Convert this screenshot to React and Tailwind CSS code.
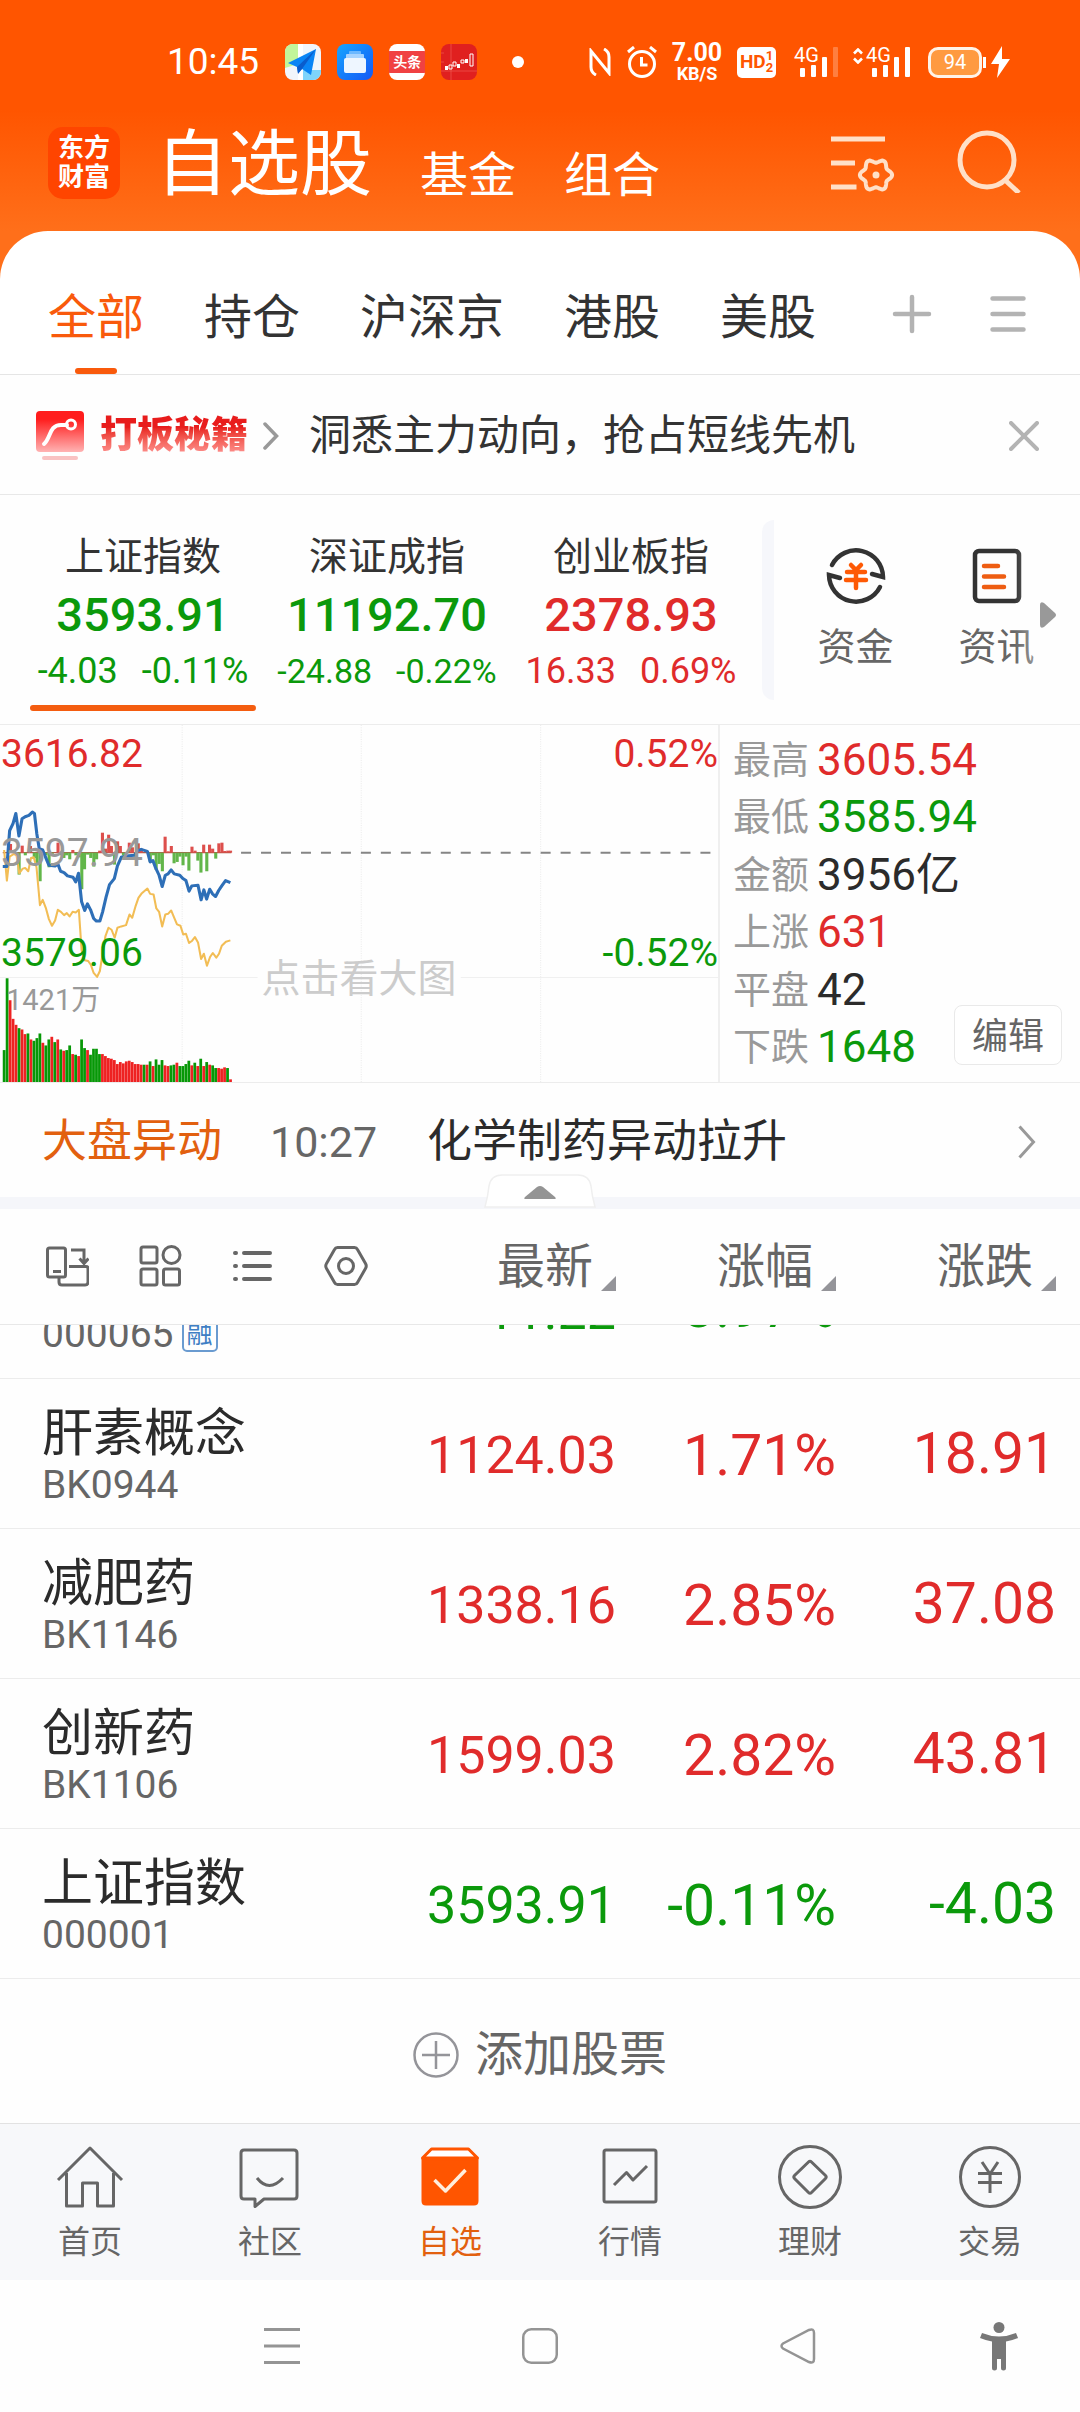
import React from "react";

const RED = "text-[#e02b2b]";
const GREEN = "text-[#0b990b]";

/* ---------- status bar ---------- */

function MapAppIcon() {
  return (
    <svg viewBox="0 0 36 36" className="size-9">
      <defs>
        <clipPath id="mapClip"><rect width="36" height="36" rx="8" /></clipPath>
      </defs>
      <g clipPath="url(#mapClip)">
        <rect width="36" height="36" fill="#f1f5fb" />
        <path d="M0 0h13v20L0 24z" fill="#c2f59a" />
        <path d="M18 26h18v10H18z" fill="#7ed4fb" />
        <path d="M13 0h5v36h-5z" fill="#fff" />
      </g>
      <path d="M31 5L3 19l9 4 1 6 4-4 9 6z" fill="#0a84f5" />
      <path d="M31 5L12 23l1 7 4-5z" fill="#0a5ccc" />
    </svg>
  );
}

function FilesAppIcon() {
  return (
    <svg viewBox="0 0 36 36" className="size-9">
      <defs>
        <linearGradient id="filesBg" x1="0" y1="0" x2="1" y2="1">
          <stop offset="0" stopColor="#16a5ff" />
          <stop offset="1" stopColor="#1458f5" />
        </linearGradient>
      </defs>
      <rect width="36" height="36" rx="8" fill="url(#filesBg)" />
      <rect x="12" y="7" width="12" height="5" rx="1" fill="#6cb8ff" />
      <rect x="9" y="10" width="18" height="6" rx="1" fill="#a6d3ff" />
      <rect x="7" y="14" width="22" height="15" rx="2" fill="#eef6ff" />
    </svg>
  );
}

function StockAppIcon() {
  return (
    <svg viewBox="0 0 36 36" className="size-9">
      <rect width="36" height="36" rx="8" fill="#e0201f" />
      <path d="M10 0v36M0 27h36M0 9h3M0 18h3" stroke="#ee5a50" strokeWidth="0.7" />
      <path d="M4 22h3v4H4zM16 20h3v4h-3zM24 15h3v4h-3z" fill="#fff" />
      <path d="M8 21h3v4H8zM12 18h3v4h-3zM20 16h3v3h-3zM29 10h3v12h-3z" fill="none" stroke="#fff" strokeWidth="1" />
    </svg>
  );
}

function Signal({ weak, data }) {
  return (
    <div className="flex items-center gap-[3px]">
      {data && (
        <svg viewBox="0 0 10 16" className="mb-3 h-4 w-[10px]" fill="none" stroke="#fff" strokeWidth="2.6">
          <path d="M1 5.500l4-4 4 4M1 10.500l4 4 4-4" />
        </svg>
      )}
      <div className="relative h-8 w-[44px]">
        <span className="absolute left-0 top-0 text-[20px] leading-[18px]">4G</span>
        <svg viewBox="0 0 44 32" className="h-8 w-[44px]" fill="#fff">
          <rect x="6" y="22" width="5" height="9" rx="1" />
          <rect x="17" y="19" width="5" height="12" rx="1" />
          <rect x="28" y="11" width="5" height="20" rx="1" />
          <rect x="39" y="1" width="5" height="30" rx="1" opacity={weak ? 0.25 : 1} />
        </svg>
      </div>
    </div>
  );
}

function StatusBar() {
  return (
    <div className="flex h-[124px] items-center justify-between pl-[167px] pr-[68px] text-white">
      <div className="flex items-center">
        <span className="text-[37px] leading-10">10:45</span>
        <div className="ml-[26px] flex items-center gap-4">
          <MapAppIcon />
          <FilesAppIcon />
          <div className="flex size-9 flex-col justify-center overflow-hidden rounded-lg bg-white">
            <span className="bg-[#f04142] text-center text-[14px] font-bold leading-[22px]">头条</span>
          </div>
          <StockAppIcon />
        </div>
        <span className="ml-[35px] size-3 rounded-full bg-white" />
      </div>
      <div className="flex items-center">
        <svg viewBox="0 0 22 28" className="h-7 w-[22px]" fill="none" stroke="#fff" strokeWidth="3">
          <path d="M7 27C3 25 2 22 2 19V3l18 22V9c0-4-1-6-5-8" />
        </svg>
        <svg viewBox="0 0 30 32" className="ml-4 h-8 w-[30px]" fill="none" stroke="#fff" strokeWidth="3">
          <circle cx="15" cy="18" r="12.500" />
          <path d="M14.500 11v8h6M1 6l6-5M29 6l-6-5" />
        </svg>
        <div className="ml-[15px] flex w-[50px] flex-col items-center font-bold">
          <span className="text-[25px] leading-[22px]">7.00</span>
          <span className="text-[18px] leading-[19px]">KB/S</span>
        </div>
        <div className="ml-[15px] flex h-[31px] w-[39px] items-center justify-center rounded-[5px] bg-white text-[#ff5500]">
          <span className="text-[19px] font-bold leading-6">HD</span>
          <span className="flex flex-col text-[13px] font-bold leading-[12px]">
            <span>1</span>
            <span>2</span>
          </span>
        </div>
        <div className="ml-[18px]"><Signal weak /></div>
        <div className="ml-[15px]"><Signal data /></div>
        <div className="ml-[18px] flex h-[31px] w-[54px] items-center justify-center rounded-[10px] border-[3px] border-[#fff3e8] bg-[#ff9a40] text-[20px] leading-6">94</div>
        <svg viewBox="0 0 30 32" className="h-8 w-[30px]" fill="#fff">
          <path d="M1 11h3v11H1zM20 0L9 18h8l-2 14 13-19h-8z" />
        </svg>
      </div>
    </div>
  );
}

/* ---------- header ---------- */

// Closed outline of a soft gear with six lobes.
function gearPath(cx, cy) {
  const points = [];
  for (let a = 0; a < 360; a += 5) {
    const t = (a * Math.PI) / 180;
    const r = 14.2 + 1.9 * Math.cos(6 * t);
    points.push((cx + r * Math.cos(t)).toFixed(1) + " " + (cy + r * Math.sin(t)).toFixed(1));
  }
  return "M" + points.join("L") + "Z";
}

function AppHeader() {
  return (
    <header className="flex h-[107px] pl-12 pr-[58px] text-white">
      <div className="mt-[3px] flex size-[72px] flex-col items-center justify-center rounded-[15px] bg-[#ff4500] text-[26px] font-bold leading-[29px]">
        <span>东方</span>
        <span>财富</span>
      </div>
      <nav className="ml-9 flex items-end gap-12 self-start">
        <a href="#watchlist" className="text-[72px] leading-[82px]">自选股</a>
        <a href="#funds" className="text-[48px] leading-[60px]">基金</a>
        <a href="#portfolio" className="text-[48px] leading-[60px]">组合</a>
      </nav>
      <div className="ml-auto flex gap-[60px]">
        <button aria-label="设置列表" className="h-[72px]">
          <svg viewBox="0 0 66 66" className="size-[66px]" fill="none" stroke="#ffe0c8" strokeWidth="5">
            <path d="M1 12h54M1 36h24M1 60h25.500" />
            <path strokeWidth="4" strokeLinejoin="round" d={gearPath(46, 48)} />
            <circle cx="46" cy="48" r="3.500" fill="#ffe0c8" stroke="none" />
          </svg>
        </button>
        <button aria-label="搜索" className="h-[72px]">
          <svg viewBox="0 0 66 66" className="size-[66px]" fill="none" stroke="#ffe0c8" strokeWidth="5">
            <circle cx="31" cy="33" r="27" />
            <path d="M49 53l14 13" />
          </svg>
        </button>
      </div>
    </header>
  );
}

function MarketTabs() {
  const tabs = ["全部", "持仓", "沪深京", "港股", "美股"];
  return (
    <div className="flex h-[144px] items-stretch justify-between rounded-t-[48px] border-b border-[#e5e5e5] bg-white pl-12 pr-[54px]">
      <div role="tablist" className="flex gap-[60px]">
        {tabs.map((t, i) => (
          <button
            key={t}
            role="tab"
            aria-selected={i === 0}
            className={"relative pt-[59px] text-[48px] leading-[56px] flex flex-col items-center justify-between " + (i === 0 ? "text-[#f95a0c]" : "text-[#333]")}
          >
            {t}
            {i === 0 && <span className="h-[6px] w-[42px] rounded-full bg-[#f95a0c]" />}
          </button>
        ))}
      </div>
      <div className="flex items-center gap-[58px] pt-[23px]">
        <button aria-label="添加分组">
          <svg viewBox="0 0 40 40" className="size-10" stroke="#b3b3b3" strokeWidth="4.500" strokeLinecap="round">
            <path d="M3 20h34M20 3v34" />
          </svg>
        </button>
        <button aria-label="分组管理">
          <svg viewBox="0 0 36 40" className="h-10 w-9" stroke="#b3b3b3" strokeWidth="4.500" strokeLinecap="round">
            <path d="M2.500 4.500h31M2.500 20h31M2.500 35.500h31" />
          </svg>
        </button>
      </div>
    </div>
  );
}

function Banner() {
  return (
    <div className="flex h-[120px] items-center border-b border-[#e8e8e8] pl-9 pr-[41px] pt-[2px]">
      <svg viewBox="0 0 48 50" className="h-[50px] w-12">
        <defs>
          <linearGradient id="badge" x1="0" y1="0" x2="0" y2="1">
            <stop offset="0.200" stopColor="#ff1d1d" />
            <stop offset="1" stopColor="#ffb3b3" />
          </linearGradient>
        </defs>
        <rect width="48" height="41" rx="4" fill="url(#badge)" />
        <path d="M8 33c7-6 5-19 17-19h6" fill="none" stroke="#fff" strokeWidth="4" strokeLinecap="round" />
        <circle cx="35" cy="13.500" r="4.500" fill="none" stroke="#fff" strokeWidth="3" />
        <rect x="6" y="45" width="36" height="4" rx="2" fill="#f9c2c2" />
      </svg>
      <a href="#secrets" className="ml-4 bg-gradient-to-b from-[#e81c1c] from-30% to-[#ff9d9d] bg-clip-text text-[37px] font-black leading-[44px] text-transparent">打板秘籍</a>
      <svg viewBox="0 0 16 30" className="ml-[15px] h-[30px] w-4" fill="none" stroke="#999" strokeWidth="3.500" strokeLinecap="round">
        <path d="M2 3l11.500 12L2 27" />
      </svg>
      <p className="ml-[30px] text-[42px] leading-[50px] text-[#333]">洞悉主力动向，抢占短线先机</p>
      <button aria-label="关闭" className="ml-auto">
        <svg viewBox="0 0 30 30" className="size-[30px]" stroke="#b3b3b3" strokeWidth="4" strokeLinecap="round">
          <path d="M2 2l26 26M28 2L2 28" />
        </svg>
      </button>
    </div>
  );
}

/* ---------- indices ---------- */

const indices = [
  { name: "上证指数", value: "3593.91", change: "-4.03", pct: "-0.11%", up: false, size: "text-[36px]", active: true },
  { name: "深证成指", value: "11192.70", change: "-24.88", pct: "-0.22%", up: false, size: "text-[34px]" },
  { name: "创业板指", value: "2378.93", change: "16.33", pct: "0.69%", up: true, size: "text-[36px]" },
];

function Indices() {
  return (
    <section className="flex h-[230px] border-b border-[#ececec]">
      <div className="grid flex-1 grid-cols-3 pl-[21px] pr-[9px]">
        {indices.map((x) => (
          <button key={x.name} className="flex flex-col items-center justify-start whitespace-nowrap pt-9">
            <span className="text-[39px] leading-[52px] text-[#333]">{x.name}</span>
            <span className={"text-[47px] font-medium leading-[64px] " + (x.up ? RED : GREEN)}>{x.value}</span>
            <span className={"flex gap-6 leading-[48px] " + x.size + " " + (x.up ? RED : GREEN)}>
              <span>{x.change}</span>
              <span>{x.pct}</span>
            </span>
            {x.active && <span className="mt-[10px] h-[6px] w-[226px] rounded-full bg-[#f45d10]" />}
          </button>
        ))}
      </div>
      <div className="relative flex w-[318px] items-center">
        <span className="mb-6 h-[180px] w-3 self-end rounded-l-xl bg-[#f6f7fb]" />
        <div className="ml-[11px] grid h-full w-[282px] grid-cols-2 pt-12 text-[38px] leading-[52px] text-[#666]">
          <a href="#capital" className="flex flex-col items-center gap-3">
            <svg viewBox="0 0 66 66" className="size-[66px]" fill="none">
              <g stroke="#333" strokeWidth="4.500" strokeLinecap="round">
                <path d="M9 22A27 27 0 0 1 60 34l-11-3" />
                <path d="M57 44A27 27 0 0 1 6 32l11 3" />
              </g>
              <g stroke="#fe5a05" strokeWidth="4.500" strokeLinecap="round">
                <path d="M28 22l5 5 5-5M24 29h18M23 37h20M33 28v17" />
              </g>
            </svg>
            资金
          </a>
          <a href="#news" className="flex flex-col items-center gap-3">
            <svg viewBox="0 0 66 66" className="size-[66px]" fill="none">
              <rect x="11" y="8" width="44" height="50" rx="4" stroke="#333" strokeWidth="4.500" />
              <path d="M20 23h14M20 33.500h20M20 44h20" stroke="#ee5d12" strokeWidth="4.500" strokeLinecap="round" />
            </svg>
            资讯
          </a>
        </div>
        <span className="absolute inset-y-0 right-0 w-[66px] bg-gradient-to-r from-white/0 to-[#fefefe]" />
        <svg viewBox="0 0 16 26" className="absolute right-6 top-[107px] h-[26px] w-4" fill="#999">
          <path d="M0 3q0-4 4-2l11 10q2 2 0 4L4 25q-4 2-4-2z" />
        </svg>
      </div>
    </section>
  );
}

/* ---------- intraday chart ---------- */

const volume = [
  [990, 0], [774, 0], [840, 1], [896, 1], [914, 1], [924, 0], [928, 1], [942, 1], [940, 0], [958, 1],
  [962, 0], [954, 0], [940, 0], [968, 1], [976, 0], [958, 0], [950, 1], [966, 0], [958, 1], [988, 0],
  [992, 1], [990, 0], [976, 0], [1002, 1], [1004, 0], [1008, 1], [958, 0], [984, 0], [990, 1], [1004, 0],
  [986, 0], [986, 0], [1002, 0], [1002, 1], [1008, 1], [1014, 1], [1016, 1], [1020, 1], [1032, 1], [1026, 1],
  [1030, 1], [1024, 1], [1022, 1], [1026, 1], [1032, 1], [1032, 1], [1034, 1], [1034, 0], [1034, 1], [1024, 0],
  [1038, 1], [1018, 0], [1034, 0], [1020, 0], [1036, 1], [1038, 1], [1036, 0], [1034, 0], [1028, 1], [1038, 0],
  [1038, 0], [1032, 0], [1022, 0], [1036, 1], [1028, 0], [1038, 1], [1016, 0], [1038, 1], [1026, 0], [1034, 1],
  [1036, 0], [1044, 0], [1044, 1], [1046, 1], [1042, 1], [1044, 0], [1078, 1],
];

const momentum = [
  [30, 370], [55, 462], [64, 375], [73, 404], [88, 376], [99, 412], [107, 430], [116, 482], [133, 404], [142, 440],
  [151, 404], [168, 366], [177, 404], [185, 412], [193, 404], [202, 416], [211, 388], [220, 404], [229, 410], [237, 506],
  [245, 446], [254, 402], [263, 412], [272, 438], [280, 416], [289, 390], [297, 336], [306, 384], [315, 342], [323, 376],
  [332, 432], [341, 362], [349, 376], [358, 404], [375, 366], [384, 380], [401, 368], [410, 384], [436, 424], [445, 404],
  [453, 448], [462, 430], [471, 452], [479, 348], [488, 392], [497, 376], [505, 428], [514, 424], [522, 408], [531, 434],
  [540, 408], [548, 450], [557, 378], [566, 390], [574, 420], [583, 456], [591, 372], [600, 452], [608, 372], [617, 384],
  [626, 414], [635, 368], [644, 366], [652, 391], [661, 390], [669, 390],
];

const priceLine =
  "8,438 20,438 28,330 38,308 46,278 55,346 64,294 73,288 84,284 94,274 100,278 107,340 114,384 124,388 134,414 142,434 160,436 168,430 176,452 186,456 196,466 212,470 220,484 228,458 237,544 246,570 254,550 263,568 272,594 280,602 290,602 298,574 308,530 318,492 332,474 341,436 352,410 366,406 390,404 400,390 410,386 428,392 436,424 444,420 452,442 462,464 471,498 480,464 488,460 497,448 506,460 522,464 531,474 540,480 549,512 557,496 575,494 584,538 592,508 600,536 609,506 617,520 626,528 635,510 644,496 655,480 669,486";

const averageLine =
  "12,388 20,480 28,408 40,400 48,404 56,458 66,444 73,442 82,452 90,412 98,410 106,440 116,554 124,538 133,562 142,596 151,616 160,600 168,568 177,574 186,584 194,578 202,588 211,574 220,576 229,568 237,690 246,720 256,722 264,734 272,758 282,770 290,752 298,700 306,648 315,622 324,628 333,652 341,622 352,618 366,614 376,582 384,592 394,556 402,532 412,518 428,504 436,520 446,522 454,564 462,574 471,618 480,582 488,580 497,570 506,592 514,612 524,616 532,642 540,640 549,668 557,662 566,650 575,666 584,716 592,700 601,736 610,710 618,698 628,712 636,700 644,676 656,664 669,660";

function IntradayChart() {
  return (
    <div className="relative h-full w-2/3 border-r-2 border-[#efefef]">
      <svg viewBox="0 12 2085 1074" preserveAspectRatio="none" className="absolute inset-0 h-full w-full" fill="none">
        <path d="M529 12V1086M1049 12V1086M1570 12V1086" stroke="#e2e2e2" strokeWidth="2" strokeDasharray="3 4" />
        <path d="M0 772H748M1338 772H2085" stroke="#ececec" strokeWidth="3" />
        <path d="M700 396H2078" stroke="#858585" strokeWidth="6" strokeDasharray="29 29" />
        <path d="M8 396H672" stroke="#b05a4a" strokeWidth="4" />
        {momentum.map(([x, y]) => (
          <rect key={x} x={x - 4} width="9" y={Math.min(y, 396)} height={Math.abs(y - 396)} fill={y < 396 ? "#dd4f4c" : "#62b64a"} />
        ))}
        {volume.map(([y, up], i) => (
          <rect key={i} x={8 + i * 8.650} width="8" y={y} height={1086 - y} fill={up ? "#ee2222" : "#079807"} />
        ))}
        <polyline points={averageLine} stroke="#f2bd55" strokeWidth="6" strokeLinejoin="round" />
        <polyline points={priceLine} stroke="#2e6fb7" strokeWidth="9" strokeLinejoin="round" />
      </svg>
      <div className="relative flex h-full flex-col text-[39px] leading-[46px]">
        <div className="mt-[6px] flex justify-between pl-px">
          <span className={RED}>3616.82</span>
          <span className={RED}>0.52%</span>
        </div>
        <span className="mt-[53px] pl-px text-[#999]">3597.94</span>
        <div className="mt-[54px] flex justify-between pl-px">
          <span className={GREEN}>3579.06</span>
          <span className={GREEN}>-0.52%</span>
        </div>
        <span className="mt-1 pl-[6px] text-[29px] leading-10 text-[#999]">1421万</span>
      </div>
      <button className="absolute left-1/2 top-[228px] -translate-x-1/2 whitespace-nowrap text-[39px] leading-[52px] text-[#ccc]">点击看大图</button>
    </div>
  );
}

const stats = [
  ["最高", "3605.54", "text-[#e02b2b]"],
  ["最低", "3585.94", "text-[#0b990b]"],
  ["金额", "3956亿", "text-[#2b2b2b]"],
  ["上涨", "631", "text-[#e02b2b]"],
  ["平盘", "42", "text-[#2b2b2b]"],
  ["下跌", "1648", "text-[#0b990b]"],
];

function MarketPanel() {
  return (
    <section className="flex h-[358px] border-b border-[#ececec]">
      <IntradayChart />
      <div className="relative flex-1">
        <dl className="flex h-full flex-col pb-[6px] pl-[13px] pt-[6px]">
          {stats.map(([label, value, tone]) => (
            <div key={label} className="flex flex-1 items-center gap-2 leading-[52px]">
              <dt className="text-[38px] text-[#999]">{label}</dt>
              <dd className={"text-[44px] " + tone}>{value}</dd>
            </div>
          ))}
        </dl>
        <button className="absolute bottom-[17px] right-[18px] h-[60px] w-[108px] rounded-lg border border-[#e9e9e9] bg-white pt-[3px] text-[36px] leading-[54px] text-[#666]">编辑</button>
      </div>
    </section>
  );
}

function Movement() {
  return (
    <section className="relative flex h-[126px] items-center border-b-12 border-[#f5f6fa] pl-[42px] pr-11 pt-1">
      <span className="text-[45px] leading-[54px] text-[#e2600f]">大盘异动</span>
      <time className="ml-12 text-[43px] leading-[54px] text-[#666]">10:27</time>
      <a href="#movement" className="ml-[50px] text-[45px] leading-[54px] text-[#2b2b2b]">化学制药异动拉升</a>
      <svg viewBox="0 0 18 34" className="ml-auto h-[34px] w-[18px]" fill="none" stroke="#999" strokeWidth="3">
        <path d="M1.500 1.500L15.500 17 1.500 32.500" />
      </svg>
      <button aria-label="收起" className="absolute left-1/2 top-[91px] -translate-x-1/2">
        <svg viewBox="0 0 112 34" className="h-[34px] w-28">
          <path d="M1 33Q4 22 5 12Q7 1 18 1h76Q105 1 107 12Q108 22 111 33z" fill="#fff" stroke="#efefef" strokeWidth="1.500" />
          <path d="M42 25q-3 0-1-2l12-10q3-2 6 0l12 10q2 2-1 2z" fill="#949494" />
        </svg>
      </button>
    </section>
  );
}

/* ---------- watch list ---------- */

const rows = [
  ["肝素概念", "BK0944", "1124.03", "1.71%", "18.91", true],
  ["减肥药", "BK1146", "1338.16", "2.85%", "37.08", true],
  ["创新药", "BK1106", "1599.03", "2.82%", "43.81", true],
  ["上证指数", "000001", "3593.91", "-0.11%", "-4.03", false],
];

function SortHeader({ children }) {
  return (
    <button className="inline-flex items-end gap-2 pt-[2px] text-[48px] font-normal leading-[56px]">
      {children}
      <svg viewBox="0 0 15 15" className="mb-1 size-[15px]" fill="#949499"><path d="M15 0v15H0z" /></svg>
    </button>
  );
}

function WatchList() {
  return (
    <table className="w-full table-fixed border-collapse">
      <colgroup>
        <col />
        <col className="w-[216px]" />
        <col className="w-[220px]" />
        <col className="w-[244px]" />
      </colgroup>
      <thead>
        <tr className="h-[115px] border-b border-[#e8e8e8] text-[#666]">
          <th className="pl-[45px] text-left">
            <div className="flex gap-[49px]">
              <button aria-label="切换视图">
                <svg viewBox="0 0 44 44" className="size-11" fill="none" stroke="#666" strokeWidth="3">
                  <rect x="2.500" y="4" width="18" height="29" rx="2" />
                  <path d="M8 27.500h8M26 6h13v13M34.500 14.500l4.500 5 4.500-5M24 22.500h17q2 0 2 2V38q0 3-3 3H17q-3 0-3-3v-4" />
                </svg>
              </button>
              <button aria-label="宫格">
                <svg viewBox="0 0 44 44" className="size-11" fill="none" stroke="#666" strokeWidth="3">
                  <rect x="3" y="3" width="16" height="16" rx="2" />
                  <circle cx="33.500" cy="11" r="8.500" />
                  <rect x="3" y="25" width="16" height="16" rx="2" />
                  <rect x="25.500" y="25" width="16" height="16" rx="2" />
                </svg>
              </button>
              <button aria-label="列表">
                <svg viewBox="0 0 44 44" className="size-11" stroke="#666" strokeWidth="4" strokeLinecap="round">
                  <path d="M4 9h1M4 22h1M4 35h1M13 9h26M13 22h26M13 35h26" />
                </svg>
              </button>
              <button aria-label="设置">
                <svg viewBox="0 0 44 44" className="size-11" fill="none" stroke="#666" strokeWidth="3" strokeLinejoin="round">
                  <path d="M13.500 3.500h17q2 0 3 2l8 14q1.500 2.500 0 5l-8 14q-1 2-3 2h-17q-2 0-3-2l-8-14q-1.500-2.500 0-5l8-14q1-2 3-2z" />
                  <circle cx="22" cy="22" r="7.500" />
                </svg>
              </button>
            </div>
          </th>
          <th className="text-right"><SortHeader>最新</SortHeader></th>
          <th className="text-right"><SortHeader>涨幅</SortHeader></th>
          <th className="pr-6 text-right"><SortHeader>涨跌</SortHeader></th>
        </tr>
      </thead>
      <tbody>
        <tr className="border-b border-[#ececec]">
          <td className="pl-[42px]">
            <div className="flex h-[53px] items-end gap-2 overflow-hidden pb-[26px]">
              <span className="text-[39px] leading-[36px] text-[#666]">000065</span>
              <span className="rounded-[5px] border-2 border-[#6a9bd0] px-[3px] text-[26px] leading-[32px] text-[#3f7fc4]">融</span>
            </div>
          </td>
          <td className={"text-right text-[52px] " + GREEN}>
            <div className="flex h-[53px] items-end justify-end overflow-hidden pb-9 leading-[60px]">11.22</div>
          </td>
          <td className={"text-right text-[57px] " + GREEN}>
            <div className="flex h-[53px] items-end justify-end overflow-hidden pb-10 leading-[60px]">-3.97%</div>
          </td>
          <td />
        </tr>
        {rows.map(([name, code, last, pct, chg, up]) => (
          <tr key={name} className="h-[150px] border-b border-[#ececec]">
            <td className="pl-[42px] pt-[3px]">
              <div className="text-[51px] leading-[60px] text-[#2b2b2b]">{name}</div>
              <div className="text-[39px] leading-[42px] text-[#666]">{code}</div>
            </td>
            <td className={"pt-[6px] text-right text-[52px] leading-[64px] " + (up ? RED : GREEN)}>{last}</td>
            <td className={"pt-[6px] text-right text-[57px] leading-[64px] " + (up ? RED : GREEN)}>{pct}</td>
            <td className={"pr-6 pt-[2px] text-right text-[57px] leading-[64px] " + (up ? RED : GREEN)}>{chg}</td>
          </tr>
        ))}
      </tbody>
    </table>
  );
}

/* ---------- bottom navigation ---------- */

const navItems = [
  {
    label: "首页",
    icon: (
      <path d="M2 36L34 4l32 32M10.500 29v33h16V39h15v23h16V29" />
    ),
  },
  {
    label: "社区",
    icon: (
      <path d="M8 6h50q3 0 3 3v43q0 3-3 3H28l-9 7.500V55H8q-3 0-3-3V9q0-3 3-3zM21 34q12 15 26 0" />
    ),
  },
  {
    label: "自选",
    active: true,
    icon: (
      <g stroke="#ff5500">
        <path d="M6.500 14L15.500 5h37l9 9z" fill="#fff" />
        <path d="M7 15h54v42q0 3-3 3H10q-3 0-3-3z" fill="#ff5500" />
        <path d="M18.500 36l11 11 20-21" stroke="#ffeedd" strokeWidth="3.500" />
      </g>
    ),
  },
  {
    label: "行情",
    icon: (
      <>
        <rect x="8" y="6" width="52" height="52" rx="2" />
        <path d="M18 41l12.500-12.500 6.500 7.500 14-14" />
      </>
    ),
  },
  {
    label: "理财",
    icon: (
      <>
        <circle cx="34" cy="33" r="30.500" />
        <path d="M32.500 18q1.500-1.500 3 0l14 13.500q1.500 1.500 0 3l-14 14q-1.500 1.500-3 0l-14-14q-1.500-1.500 0-3z" />
      </>
    ),
  },
  {
    label: "交易",
    icon: (
      <>
        <circle cx="34" cy="33" r="29.500" />
        <path d="M26 18l8 12 8-12M22 29.500h24M22 38.500h24M34 30v19" />
      </>
    ),
  },
];

function BottomNav() {
  return (
    <nav className="grid h-[157px] grid-cols-6 border-t border-[#e2e2e2] bg-[#f7f8fa]">
      {navItems.map((n) => (
        <a key={n.label} href="#nav" className={"flex flex-col items-center pt-5 text-[32px] leading-10 " + (n.active ? "text-[#e2600f]" : "text-[#666]")}>
          <svg viewBox="0 0 68 68" className="size-[68px]" fill="none" stroke="#666" strokeWidth="3" strokeLinejoin="round">
            {n.icon}
          </svg>
          <span className="mt-[10px]">{n.label}</span>
        </a>
      ))}
    </nav>
  );
}

function SystemNav() {
  return (
    <div className="grid h-[132px] grid-cols-[153fr_258fr_258fr_258fr_143fr_10fr] items-center">
      <span />
      <button aria-label="最近任务" className="flex justify-center">
        <svg viewBox="0 0 36 40" className="h-10 w-9" stroke="#949494" strokeWidth="3"><path d="M0 3.500h36M0 20h36M0 36.500h36" /></svg>
      </button>
      <button aria-label="主屏幕" className="flex justify-center">
        <svg viewBox="0 0 36 36" className="size-9" fill="none" stroke="#949494" strokeWidth="2.500"><rect x="1.250" y="1.250" width="33.500" height="33.500" rx="8" /></svg>
      </button>
      <button aria-label="返回" className="flex justify-center">
        <svg viewBox="0 0 36 36" className="size-9" fill="none" stroke="#949494" strokeWidth="2.500">
          <path d="M3 15.500L29 2q5-2 5 3v26q0 5-5 3L3 20.500q-3-2.500 0-5z" />
        </svg>
      </button>
      <button aria-label="无障碍" className="flex justify-center">
        <svg viewBox="0 0 38 50" className="h-[50px] w-[38px]" fill="#777">
          <circle cx="19" cy="6.500" r="5.500" />
          <path d="M2 12q17 7 34 0l2 5q-6 2.500-12 3.500V47q0 2.500-2.500 2.500T21 47v-9h-4v9q0 2.500-2.500 2.500T12 47V20.500Q6 19.500 0 17z" />
        </svg>
      </button>
    </div>
  );
}

export default function App() {
  return (
    <div className="w-full overflow-hidden bg-[#fefefe] font-['Roboto','Noto_Sans_CJK_SC',sans-serif]">
      <div className="bg-[linear-gradient(#ff5500_110px,#ff6f1a_231px)]">
        <StatusBar />
        <AppHeader />
        <MarketTabs />
      </div>
      <Banner />
      <Indices />
      <MarketPanel />
      <Movement />
      <WatchList />
      <div className="flex h-[144px] items-center justify-center pt-2">
        <button className="flex items-center gap-4 text-[48px] leading-[56px] text-[#666]">
          <svg viewBox="0 0 46 46" className="size-[46px]" fill="none" stroke="#949499" strokeWidth="2.500">
            <circle cx="23" cy="23" r="21.500" />
            <path d="M9 23h28M23 9v28" />
          </svg>
          添加股票
        </button>
      </div>
      <BottomNav />
      <SystemNav />
    </div>
  );
}
